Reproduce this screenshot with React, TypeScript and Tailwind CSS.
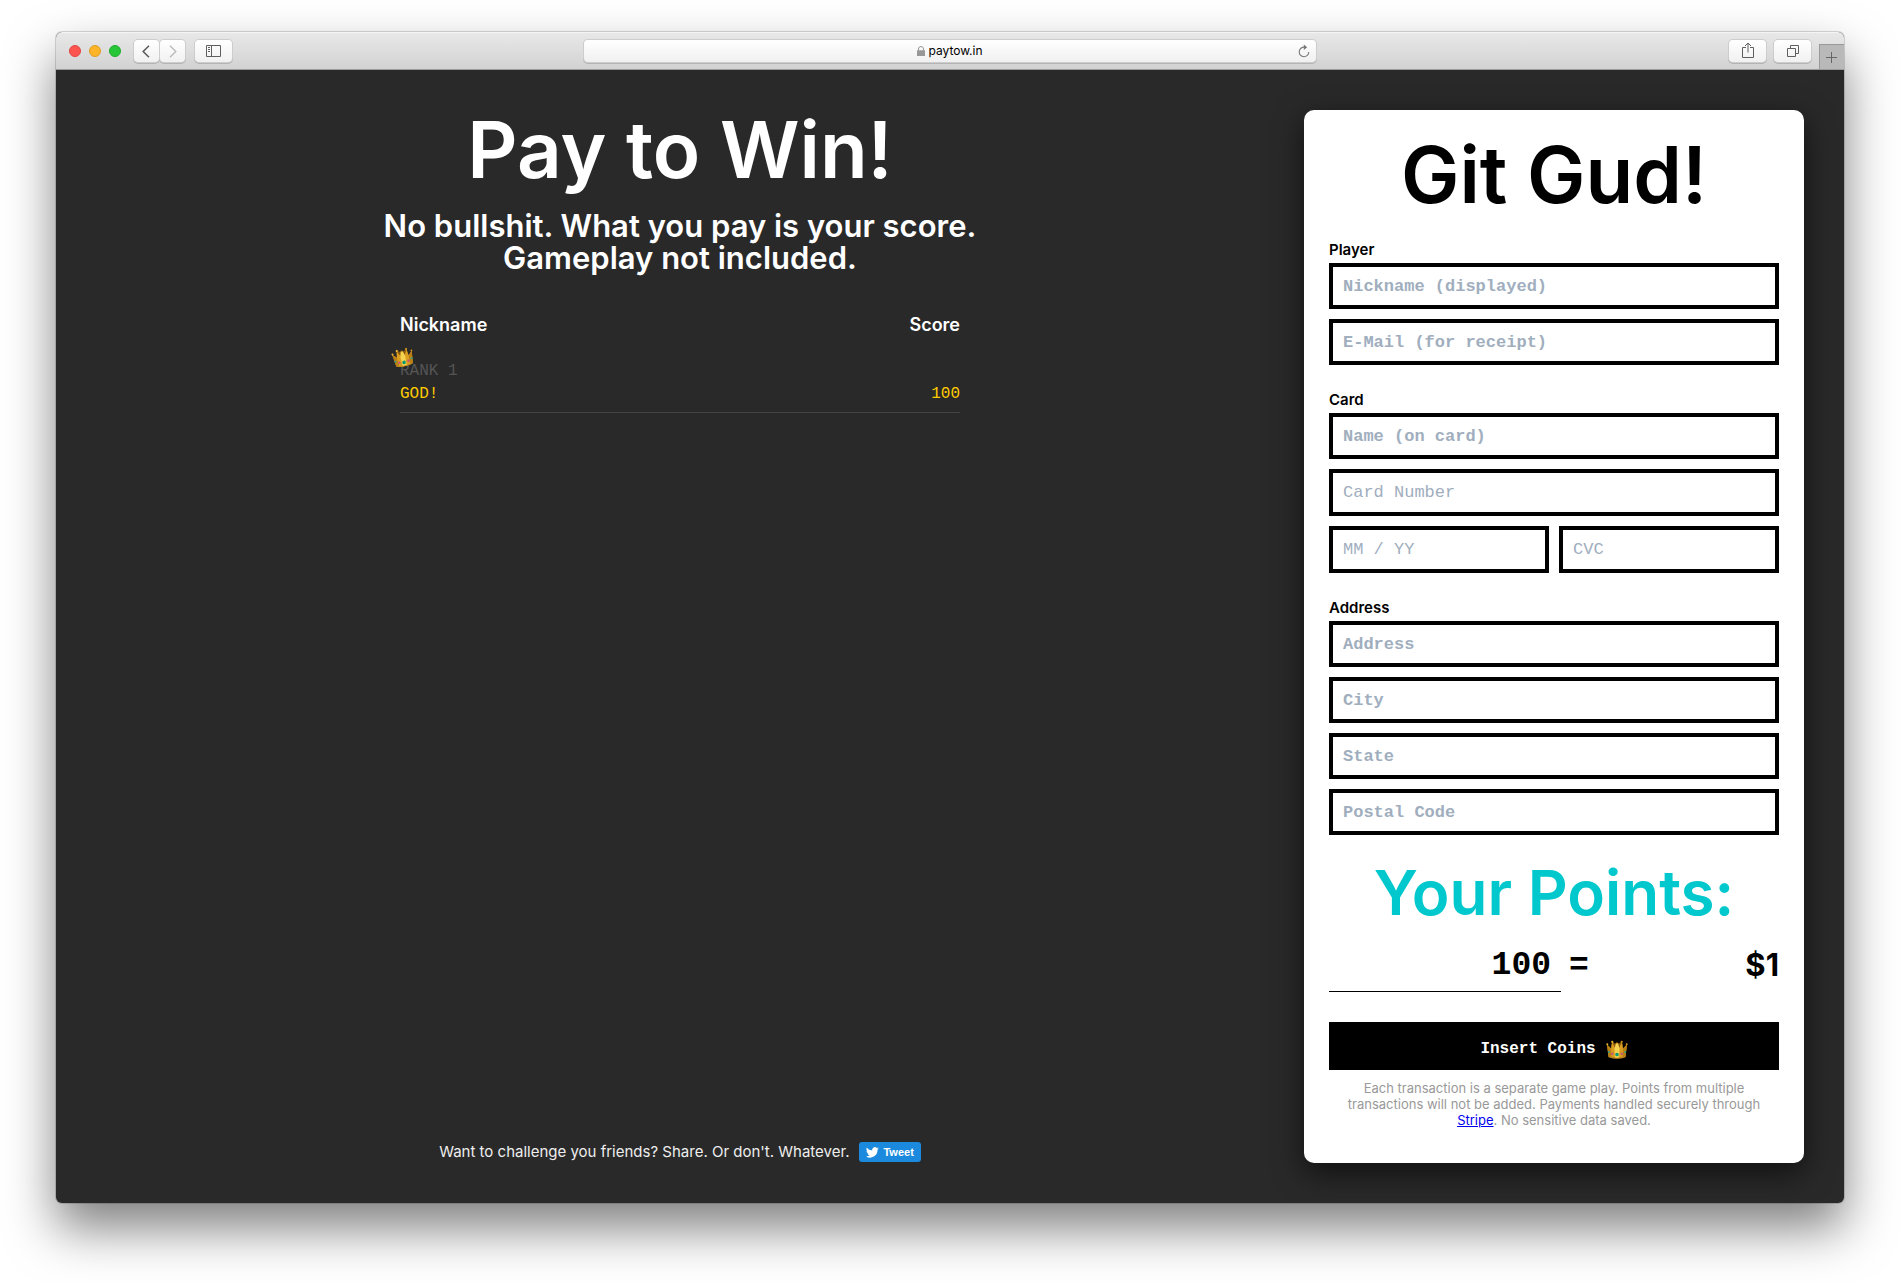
import React, { useState } from "react";

function Crown({ className }: { className: string }) {
  return (
    <svg viewBox="0 0 44 38" className={className} aria-hidden="true">
      <path d="M11 10 13 3 18 7 22 4 26 7 31 3 33 10 34 24 10 24Z" fill="#8a5a0c" />
      <path d="M2 9 10 17 12 4 18 16 20 7 24 7 26 16 32 4 34 17 42 9 39 33Q22 40 5 33Z" fill="#d99d1f" />
      <path d="M17 17 20 7 24 7 27 17 26 36 18 36Z" fill="#f5d24f" />
      <path d="M2 9 10 17 11 34.600 5 33ZM42 9 34 17 33 34.600 39 33Z" fill="#b97f14" />
      <path d="M5 32Q22 39 39 32L39 34.500Q22 40.500 5 34.500Z" fill="#c08a20" />
      <circle cx="2.600" cy="8.600" r="2" fill="#eeb935" />
      <circle cx="12.500" cy="3.600" r="2.200" fill="#eeb935" />
      <circle cx="31.500" cy="3.600" r="2.200" fill="#cf9420" />
      <circle cx="41.400" cy="8.600" r="2" fill="#cf9420" />
      <circle cx="22" cy="29" r="3.600" fill="#0b9a78" />
      <circle cx="12.500" cy="27.500" r="2.400" fill="#c9557c" />
      <circle cx="31.500" cy="27.500" r="2.400" fill="#c9557c" />
      <circle cx="5.500" cy="24" r="2" fill="#2ba383" />
      <circle cx="38.500" cy="24" r="2" fill="#2ba383" />
    </svg>
  );
}

const toolButton =
  "flex h-[22px] items-center justify-center rounded-[4px] bg-linear-to-b from-white to-[#f1f1f1] text-[#5f5f5f] shadow-[0_0_0_1px_#cdcdcd,0_1px_0_1px_#b4b4b4]";

function Toolbar() {
  return (
    <header className="grid h-[38px] shrink-0 grid-cols-[1fr_minmax(0,732px)_1fr] items-center border-t border-b border-t-[#f4f4f4] border-b-[#9a9a9a] bg-linear-to-b from-[#e8e8e8] to-[#d2d2d2]">
      <div className="flex items-center pl-[13px]">
        <div className="flex gap-2">
          <span className="size-3 rounded-full border border-[#e2443f] bg-[#fc5550]" />
          <span className="size-3 rounded-full border border-[#df9d25] bg-[#fdb429]" />
          <span className="size-3 rounded-full border border-[#1dad2b] bg-[#27c538]" />
        </div>
        <div className="ml-[13px] flex gap-px">
          <button type="button" aria-label="Back" className={toolButton + " w-[25px] pr-0.5"}>
            <svg viewBox="0 0 8 13" className="h-[13px] w-2" fill="none" stroke="currentColor" strokeWidth="1.6">
              <path d="M7 .8 1.2 6.5 7 12.2" />
            </svg>
          </button>
          <button type="button" aria-label="Forward" className={toolButton + " w-[25px]"}>
            <svg
              viewBox="0 0 8 13"
              className="h-[13px] w-2 text-[#bbb]"
              fill="none"
              stroke="currentColor"
              strokeWidth="1.4"
            >
              <path d="M1 .8 6.8 6.5 1 12.2" />
            </svg>
          </button>
        </div>
        <button type="button" aria-label="Show sidebar" className={toolButton + " ml-[10px] w-[37px]"}>
          <svg viewBox="0 0 15 12" className="h-3 w-[15px]" fill="none" stroke="currentColor">
            <path d="M.5 .5H14.5V11.5H.5ZM5.5 .5V11.5M2 2.5H4M2 4.5H4M2 6.5H4" />
          </svg>
        </button>
      </div>
      <div className="relative flex h-[22px] items-center justify-center gap-[3px] rounded-[4px] bg-linear-to-b from-white to-[#f0f0f0] shadow-[0_0_0_1px_#cdcdcd,0_1px_0_1px_#b4b4b4]">
        <svg viewBox="0 0 8 10" className="h-[10px] w-2 text-[#979797]" aria-hidden="true">
          <path d="M0 4.3H8V10H0Z" fill="currentColor" />
          <path d="M1.5 4.5V3A2.5 2.5 0 0 1 6.5 3V4.5" fill="none" stroke="currentColor" />
        </svg>
        <span className="text-xs text-black">paytow.in</span>
        <button type="button" aria-label="Reload" className="absolute top-1 right-1.5 text-[#777]">
          <svg viewBox="0 0 12 14" className="h-[14px] w-3" fill="none" stroke="currentColor" strokeWidth="1.1">
            <path d="M6.5 3.2A4.8 4.8 0 1 0 10.8 8" />
            <path d="M5.8 .4 9.2 3.3 5.8 6Z" fill="currentColor" stroke="none" />
          </svg>
        </button>
      </div>
      <div className="flex items-center justify-end self-stretch">
        <button type="button" aria-label="Share" className={toolButton + " w-[37px]"}>
          <svg viewBox="0 0 12 16" className="mb-0.5 h-4 w-3" fill="none" stroke="currentColor">
            <path d="M4 5.5H.5V15.5H11.5V5.5H8M6 1V10.5M3 4 6 1 9 4" />
          </svg>
        </button>
        <button type="button" aria-label="Show all tabs" className={toolButton + " ml-2 w-[37px]"}>
          <svg viewBox="0 0 12 12" className="h-3 w-3" fill="none" stroke="currentColor">
            <path d="M.5 3.5H8.5V11.5H.5ZM3.5 3V.5H11.5V8.5H9" />
          </svg>
        </button>
        <button
          type="button"
          aria-label="New tab"
          className="ml-2 flex h-[25px] w-[25px] items-center justify-center self-end border-t border-l border-[#999] bg-[#b9b9b9] pr-0.5 text-[#666]"
        >
          <svg viewBox="0 0 11 11" className="size-[11px]" fill="none" stroke="currentColor">
            <path d="M5.5 0V11M0 5.5H11" />
          </svg>
        </button>
      </div>
    </header>
  );
}

const scores = [{ rank: 1, name: "GOD!", score: 100 }];

function Leaderboard() {
  return (
    <section className="flex flex-1 flex-col items-center text-white">
      <h1 className="text-center text-[78px] leading-[80px] font-semibold">Pay to Win!</h1>
      <p className="mt-5 text-center text-[31px] leading-8 font-semibold">
        No bullshit. What you pay is your score.
        <br />
        Gameplay not included.
      </p>
      <table className="mt-[39px] w-[560px] max-w-full">
        <thead>
          <tr className="text-lg leading-6">
            <th className="text-left font-semibold">Nickname</th>
            <th className="text-right font-semibold">Score</th>
          </tr>
        </thead>
        <tbody className="font-['Liberation_Mono',monospace] text-base leading-[23px] text-[#fc0]">
          {scores.map((row) => (
            <tr key={row.rank} className="border-b border-[#444]">
              <td className="relative pt-[23px] pb-[6px]">
                <div className="text-[#555]">RANK {row.rank}</div>
                {row.name}
                {row.rank === 1 && <Crown className="absolute top-[11px] -left-2 h-[19px] w-[22px] -rotate-12" />}
              </td>
              <td className="pb-[6px] text-right align-bottom">{row.score}</td>
            </tr>
          ))}
        </tbody>
      </table>
      <footer className="mt-auto flex items-center gap-[10px] text-[15px] leading-[22px] text-[#eee]">
        <span>Want to challenge you friends? Share. Or don't. Whatever.</span>
        <a
          href="#tweet"
          className="flex h-5 items-center gap-1 rounded-[3px] bg-[#1b8ade] px-[7px] font-['Liberation_Sans',sans-serif] text-[11px] font-bold text-white"
        >
          <svg viewBox="0 0 24 20" className="h-[11px] w-[13px]" fill="currentColor" aria-hidden="true">
            <path d="M23.6 2.4a9.6 9.6 0 0 1-2.8.8A4.8 4.8 0 0 0 22.9.5a9.7 9.7 0 0 1-3.1 1.2 4.85 4.85 0 0 0-8.3 4.4A13.8 13.8 0 0 1 1.5 1a4.85 4.85 0 0 0 1.5 6.500 4.800 4.800 0 0 1-2.200-.6 4.850 4.850 0 0 0 3.900 4.800 4.900 4.900 0 0 1-2.200.1 4.850 4.850 0 0 0 4.500 3.400A9.750 9.750 0 0 1 0 17.200a13.750 13.750 0 0 0 21.200-12.300 9.800 9.800 0 0 0 2.400-2.500Z" />
          </svg>
          Tweet
        </a>
      </footer>
    </section>
  );
}

function Field({ label, weight = "bold" }: { label: string; weight?: "bold" | "normal" }) {
  return (
    <input
      type="text"
      aria-label={label}
      placeholder={label}
      className={
        "w-full min-w-0 rounded-none border-4 border-black bg-white px-[10px] font-['Liberation_Mono',monospace] text-[17px] text-black outline-none placeholder:text-[#a0aebe] " +
        (weight === "bold" ? "h-[46px] font-bold" : "h-[47px] font-normal")
      }
    />
  );
}

function Group({ title, children }: { title: string; children: React.ReactNode }) {
  return (
    <fieldset className="mt-[25px] flex min-w-0 flex-col gap-[10px]">
      <legend className="mb-[3px] text-[15px] leading-5 font-semibold">{title}</legend>
      {children}
    </fieldset>
  );
}

function PaymentForm() {
  const [points, setPoints] = useState("100");
  return (
    <form
      onSubmit={(e) => e.preventDefault()}
      className="w-[500px] shrink-0 rounded-[10px] bg-white p-[25px] text-black shadow-[0_10px_30px_rgba(0,0,0,0.6)]"
    >
      <h2 className="text-center text-[78px] leading-[80px] font-semibold">Git Gud!</h2>
      <Group title="Player">
        <Field label="Nickname (displayed)" />
        <Field label="E-Mail (for receipt)" />
      </Group>
      <Group title="Card">
        <Field label="Name (on card)" />
        <Field label="Card Number" weight="normal" />
        <div className="grid grid-cols-2 gap-[10px]">
          <Field label="MM / YY" weight="normal" />
          <Field label="CVC" weight="normal" />
        </div>
      </Group>
      <Group title="Address">
        <Field label="Address" />
        <Field label="City" />
        <Field label="State" />
        <Field label="Postal Code" />
      </Group>
      <label
        htmlFor="points"
        className="mt-[26px] block text-center text-[62px] leading-[64px] font-semibold text-[#00c8cc]"
      >
        Your Points:
      </label>
      <div className="mt-[11px] flex items-center">
        <input
          id="points"
          type="text"
          value={points}
          onChange={(e) => setPoints(e.target.value)}
          className="h-14 w-[232px] border-b border-black bg-transparent px-[10px] pt-1 text-right font-['Liberation_Mono',monospace] text-[33px] font-bold outline-none"
        />
        <span className="ml-2 pt-1.5 font-['Liberation_Mono',monospace] text-[33px] leading-10 font-bold">=</span>
        <output htmlFor="points" className="ml-auto pt-0.5 text-[31px] leading-10 font-bold">
          ${Math.round(Number(points) / 100) || 0}
        </output>
      </div>
      <button
        type="submit"
        className="mt-[30px] flex h-12 w-full items-center justify-center gap-[10px] bg-black pt-1.5 font-['Liberation_Mono',monospace] text-base font-bold text-white"
      >
        Insert Coins
        <Crown className="h-[19px] w-[22px]" />
      </button>
      <p className="mt-[10px] mb-[10px] text-center text-[13px] leading-4 text-[#999]">
        Each transaction is a separate game play. Points from multiple transactions will not be added. Payments handled
        securely through{" "}
        <a href="#stripe" className="text-[#00e] underline">
          Stripe
        </a>
        . No sensitive data saved.
      </p>
    </form>
  );
}

export default function App() {
  return (
    <div className="min-h-screen bg-white px-14 pt-8 pb-20 font-['Inter',sans-serif]">
      <div className="flex flex-col overflow-hidden rounded-[6px] bg-[#292929] shadow-[0_0_0_1px_rgba(0,0,0,0.15),0_25px_50px_rgba(0,0,0,0.5)]">
        <Toolbar />
        <main className="flex flex-1 gap-10 p-10">
          <Leaderboard />
          <PaymentForm />
        </main>
      </div>
    </div>
  );
}
